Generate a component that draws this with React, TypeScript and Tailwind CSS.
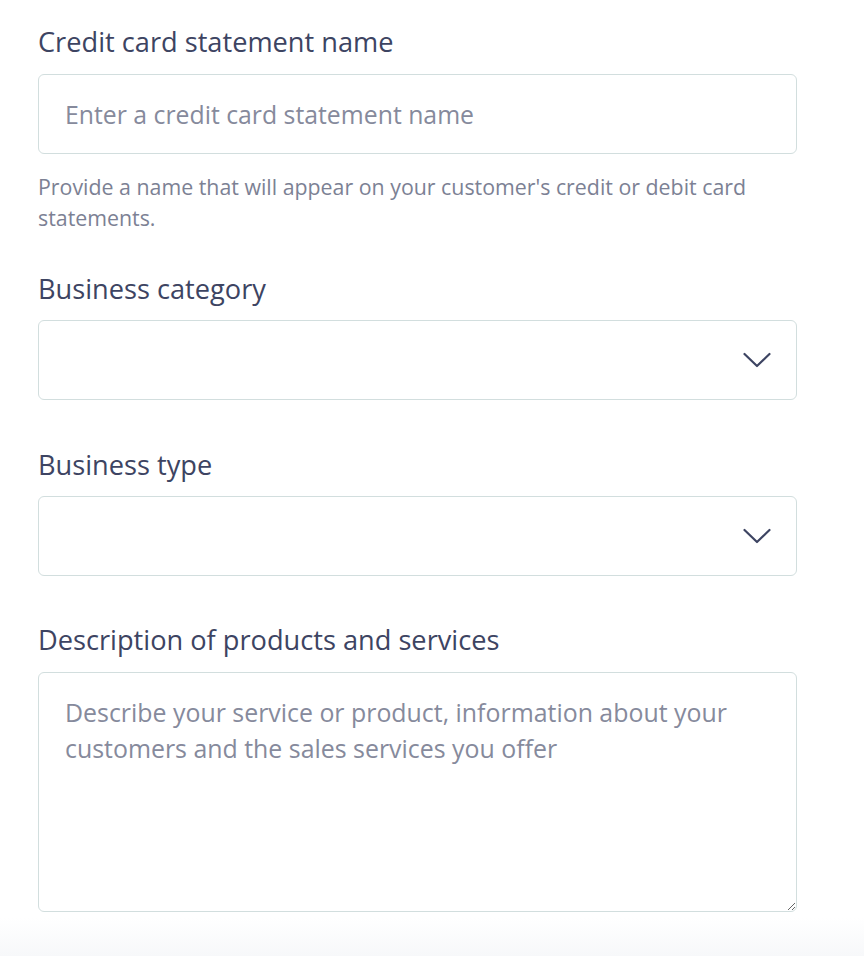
const FONT = "font-['Open_Sans',_'Noto_Sans',_sans-serif]";

function Label({ children }: { children: React.ReactNode }) {
  return <label className="block text-[27.2px] leading-[32px] text-[#3d4462]">{children}</label>;
}

function SelectBox() {
  return (
    <div className="mt-[15px] flex h-[80px] items-center justify-end rounded-[6px] border border-[#d2dede] bg-white pr-[25px]">
      <svg width="28" height="16" viewBox="0 0 28 16" fill="none" className="text-[#3d4462]">
        <path d="M1.5 2 L14 14 L26.5 2" stroke="currentColor" strokeWidth="2.2" strokeLinecap="round" strokeLinejoin="round" />
      </svg>
    </div>
  );
}

export default function App() {
  return (
    <div className={`${FONT} min-h-[956px] bg-gradient-to-b from-white from-[96%] to-[#f7f8fa]`}>
      <div className="w-[797px] pl-[38px] pt-[26px]">
        <Label>Credit card statement name</Label>
        <input
          type="text"
          placeholder="Enter a credit card statement name"
          className="mt-[16px] block h-[80px] w-full rounded-[6px] border border-[#d2dede] bg-white px-[26px] text-[24.8px] text-[#3d4462] placeholder:text-[#868a9c] focus:outline-none"
        />
        <p className="mt-[17px] text-[21.35px] leading-[31px] text-[#7c8194]">
          Provide a name that will appear on your customer's credit or debit card statements.
        </p>

        <div className="mt-[40px]">
          <Label>Business category</Label>
          <SelectBox />
        </div>

        <div className="mt-[49px]">
          <Label>Business type</Label>
          <SelectBox />
        </div>

        <div className="mt-[48px]">
          <Label>Description of products and services</Label>
          <textarea
            placeholder="Describe your service or product, information about your customers and the sales services you offer"
            className="mt-[16px] block h-[240px] w-full rounded-[6px] border border-[#d2dede] bg-white px-[26px] py-[21px] text-[24.9px] leading-[36px] text-[#3d4462] placeholder:text-[#868a9c] focus:outline-none"
          />
        </div>
      </div>
    </div>
  );
}
